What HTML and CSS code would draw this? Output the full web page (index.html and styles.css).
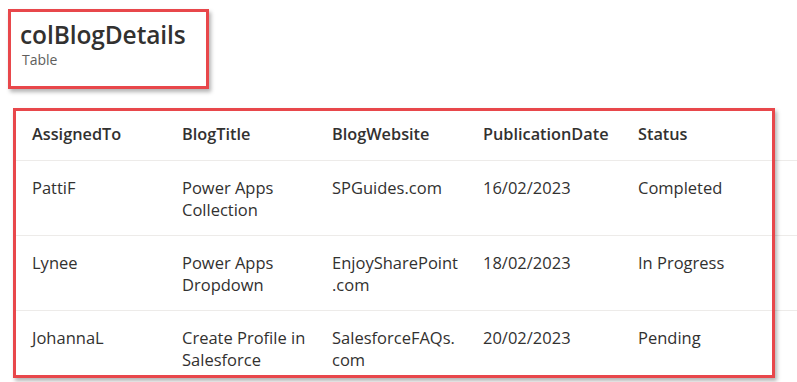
FILE: index.html
```html
<!DOCTYPE html>
<html lang="en">
<head>
  <meta charset="UTF-8" />
  <meta name="viewport" content="width=device-width, initial-scale=1" />
  <title>colBlogDetails</title>
  <link rel="stylesheet" href="styles.css">
</head>
<body>
  <!-- Collection name card -->
  <div class="name-card">
    <h1 class="name">colBlogDetails</h1>
    <div class="kind">Table</div>
  </div>

  <!-- Collection data -->
  <div class="table-wrap">
    <div class="row head">
      <div class="cell">AssignedTo</div>
      <div class="cell">BlogTitle</div>
      <div class="cell">BlogWebsite</div>
      <div class="cell">PublicationDate</div>
      <div class="cell">Status</div>
    </div>
    <div class="row">
      <div class="cell">PattiF</div>
      <div class="cell">Power Apps Collection</div>
      <div class="cell">SPGuides.com</div>
      <div class="cell">16/02/2023</div>
      <div class="cell">Completed</div>
    </div>
    <div class="row">
      <div class="cell">Lynee</div>
      <div class="cell">Power Apps Dropdown</div>
      <div class="cell">EnjoySharePoint<wbr>.com</div>
      <div class="cell">18/02/2023</div>
      <div class="cell">In Progress</div>
    </div>
    <div class="row">
      <div class="cell">JohannaL</div>
      <div class="cell">Create Profile in Salesforce</div>
      <div class="cell">SalesforceFAQs.<wbr>com</div>
      <div class="cell">20/02/2023</div>
      <div class="cell">Pending</div>
    </div>
  </div>
</body>
</html>
```

FILE: styles.css
```css
/* Basic Reset */
* {
  margin: 0;
  padding: 0;
  box-sizing: border-box;
}

body {
  background: #fff;
  font-family: 'Open Sans', 'Noto Sans', sans-serif;
  color: #323130;
  width: 797px;
  height: 382px;
  overflow: hidden;
}

/* Red highlight frames */
.name-card,
.table-wrap::after {
  border: 3px solid #e8474b;
  box-shadow: 2px 3px 4px rgba(0, 0, 0, 0.3);
}

/* Name card */
.name-card {
  width: 201px;
  height: 80px;
  margin: 9px 0 0 8px;
  padding: 7px 0 0 9px;
}

.name {
  font-size: 24.5px;
  font-weight: 600;
  line-height: 31px;
  letter-spacing: -0.1px;
}

.kind {
  font-size: 14px;
  line-height: 19px;
  color: #605e5c;
  margin-left: 2px;
}

/* Data table */
.table-wrap {
  position: relative;
  margin: 19px 0 0 13px;
}

.table-wrap::after {
  content: "";
  position: absolute;
  left: 0;
  top: 0;
  width: 756px;
  height: 264px;
  pointer-events: none;
}

.row {
  display: grid;
  grid-template-columns: 150px 150px 151px 155px 1fr;
  height: 75px;
  border-top: 1px solid #edebe9;
  font-size: 16.5px;
  line-height: 22px;
}

.row:last-child {
  height: auto;
}

.row.head {
  height: 52px;
  border-top: none;
  font-weight: 600;
  font-size: 16.3px;
  align-items: center;
}

.cell {
  padding: 0 2px 0 19px;
  overflow-wrap: anywhere;
}

.row:not(.head) .cell {
  padding-top: 16px;
}
```
